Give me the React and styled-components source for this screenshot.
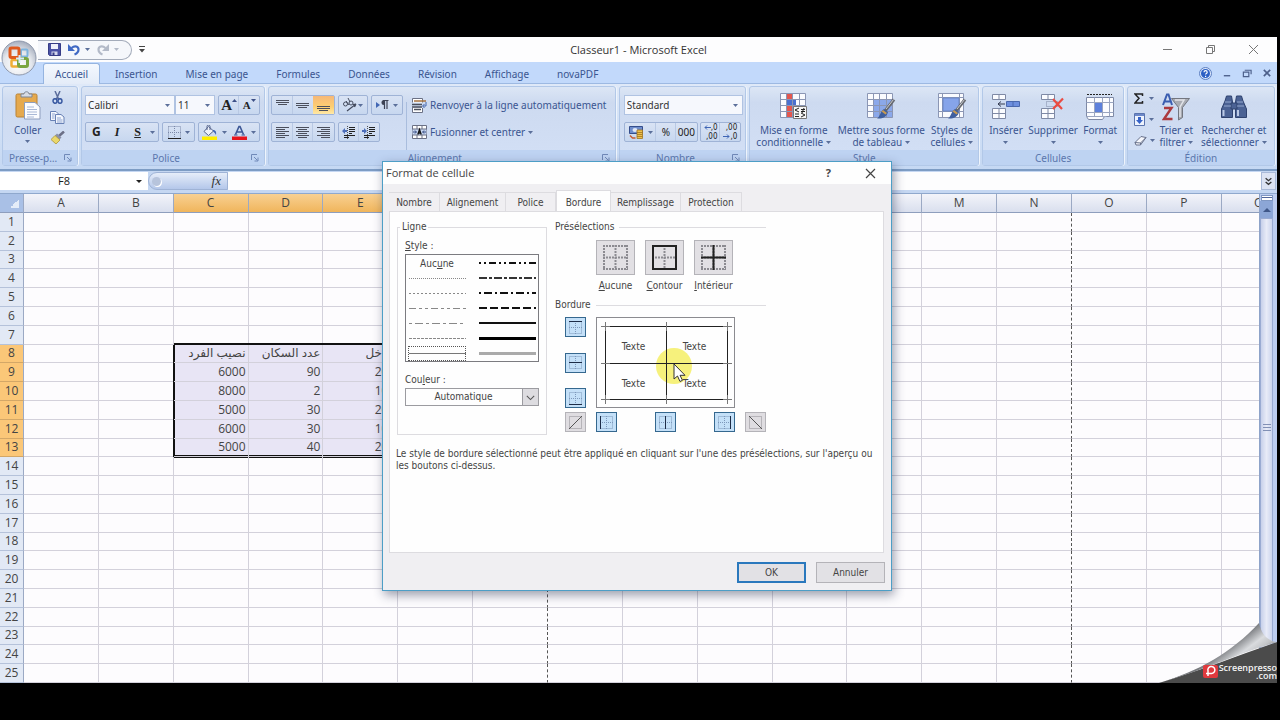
import React, { useState } from "react";
import styled, { createGlobalStyle } from "styled-components";

const RIBBON_FONT = `"Noto Sans", "Open Sans", sans-serif`;
const TITLE_FONT = `"Open Sans", "Noto Sans", sans-serif`;
const DIALOG_FONT = `"DejaVu Sans Condensed", "DejaVu Sans", sans-serif`;
const CELL_FONT = `"Open Sans", "DejaVu Sans", sans-serif`;

const GlobalStyle = createGlobalStyle`
  * { box-sizing: border-box; }
  body { margin: 0; background: #000; }
  button, select, input { font: inherit; color: inherit; margin: 0; padding: 0; }
  svg { display: block; flex: none; }
`;

// ---------------------------------------------------------------------------
// Window
// ---------------------------------------------------------------------------
const Desktop = styled.div`
  height: 100vh;
  padding: 37px 3px 37px 0;
  background: #000;
`;

const Window = styled.div`
  position: relative;
  display: flex;
  flex-direction: column;
  height: 100%;
  overflow: hidden;
  background: #bfd6f7;
  font: 10px/12px ${RIBBON_FONT};
  color: #3a5590;
`;

const TitleBar = styled.header`
  display: grid;
  grid-template-columns: 1fr auto 1fr;
  align-items: center;
  height: 25px;
  background: #fdfdfe;
`;

const Title = styled.h1`
  margin: 0;
  font: 11px/16px ${TITLE_FONT};
  color: #333;
`;

const QuickAccess = styled.div`
  display: flex;
  align-items: center;
  gap: 7px;
  width: 94px;
  height: 20px;
  margin-left: 38px;
  padding-left: 10px;
  border: 1px solid #a3abba;
  border-left: 0;
  border-radius: 0 10px 10px 0;
  background: #f5f7fb;
`;

const QuickWrap = styled.div`
  display: flex;
  align-items: center;
  gap: 7px;
`;

const WindowButtons = styled.div`
  display: flex;
  justify-content: flex-end;
  gap: 32px;
  padding-right: 18px;
`;

const Plain = styled.button`
  display: flex;
  align-items: center;
  justify-content: center;
  gap: ${(p) => p.$gap || 0}px;
  border: 0;
  background: none;
`;

const OfficeButton = styled.button`
  position: absolute;
  left: 1px;
  top: 3px;
  z-index: 2;
  padding: 0;
  border: 0;
  border-radius: 50%;
  background: none;
`;

const TabBar = styled.nav`
  display: flex;
  align-items: flex-end;
  height: 22px;
  padding: 2px 5px 0 43px;
  background: #c2d9fb;
  border-bottom: 1px solid #9db9e2;
`;

const RibbonTab = styled.button`
  height: 20px;
  padding: 0 13px;
  border: 1px solid transparent;
  border-bottom: 0;
  border-radius: 3px 3px 0 0;
  background: none;
  font: 10px/18px ${RIBBON_FONT};
  color: #3a5590;
  white-space: nowrap;

  ${(p) =>
    p.$active &&
    `
    height: 21px;
    margin: 0 1px -1px 0;
    padding: 0 11px;
    border-color: #95b4e0;
    background: linear-gradient(#f4f8fe, #e4ecf8);
  `}
`;

const MdiButtons = styled.div`
  display: flex;
  align-items: center;
  gap: 10px;
  height: 20px;
  margin-left: auto;
`;

// ---------------------------------------------------------------------------
// Ribbon
// ---------------------------------------------------------------------------
const Ribbon = styled.div`
  display: flex;
  gap: 3px;
  height: 87px;
  padding: 2px 2px 3px;
  background: linear-gradient(#dfe9f8, #c5d8f3);
  border-bottom: 2px solid #7d9cc4;
`;

const Group = styled.section`
  display: flex;
  flex-direction: column;
  flex: ${(p) => p.$w} 1 0;
  min-width: 0;
  border: 1px solid #b2c8e8;
  border-radius: 3px;
  background: linear-gradient(#dce6f5 0%, #cddaf0 20%, #d3e0f6 100%);
  box-shadow: 1px 0 0 #eef4fc;
`;

const GroupBody = styled.div`
  display: flex;
  flex: 1;
  min-height: 0;
  gap: ${(p) => p.$gap || 0}px;
  padding: ${(p) => p.$pad || "0 4px"};
`;

const GroupCaption = styled.div`
  display: grid;
  grid-template-columns: ${(p) => (p.$launcher ? "1fr 14px" : "1fr")};
  align-items: center;
  height: 15px;
  padding: 0 2px;
  background: #bed3f2;
  color: #5b77ad;
  text-align: center;
`;

const Stack = styled.div`
  display: flex;
  flex-direction: column;
  gap: ${(p) => p.$gap || 0}px;
  align-items: ${(p) => p.$align || "stretch"};
  min-width: 0;
`;

const Row = styled.div`
  display: flex;
  align-items: center;
  gap: ${(p) => p.$gap || 0}px;
`;

const ButtonBox = styled.div`
  display: flex;
  align-items: center;
  justify-content: space-around;
  width: ${(p) => p.$w}px;
  height: 20px;
  border: 1px solid #9fb3d6;
  border-radius: 2px;
  background: linear-gradient(#d9e3f4, #c7d7ef);
`;

const Tool = styled.button`
  display: flex;
  flex: ${(p) => p.$grow || 2} 1 0;
  align-items: center;
  justify-content: center;
  gap: ${(p) => (p.$tight ? 0 : 4)}px;
  height: 18px;
  border: 0;
  background: ${(p) => (p.$on ? "linear-gradient(#f6b878, #fdcf72 60%, #ffe9a8)" : "none")};
  color: #222;
  box-shadow: ${(p) => (p.$line ? "-1px 0 0 #b9c9e4" : "none")};
`;

const Letter = styled.span`
  font: ${(p) => p.$style || "normal"} bold ${(p) => p.$size || 12}px/14px ${(p) => p.$face || `"Liberation Serif", serif`};
  text-decoration: ${(p) => (p.$under ? "underline" : "none")};
  color: ${(p) => p.$color || "#222"};
`;

const Combo = styled.div`
  display: flex;
  align-items: center;
  width: ${(p) => p.$w}px;
  height: 20px;
  padding: 0 4px 0 2px;
  border: 1px solid #b0c3e2;
  background: #f6f8fd;
  color: #333;
`;

const ComboInput = styled.input`
  flex: 1;
  min-width: 0;
  width: 100%;
  border: 0;
  outline: 0;
  background: none;
`;

const BigTool = styled.button`
  display: flex;
  flex-direction: column;
  align-items: center;
  gap: 4px;
  flex: ${(p) => p.$w || 1} 1 0;
  min-width: 0;
  border: 0;
  background: none;
  line-height: 12px;
  white-space: nowrap;
  text-align: center;
`;

const BigIcon = styled.span`
  display: flex;
  justify-content: center;
  height: 27px;
`;

const Inline = styled.span`
  display: inline-flex;
  align-items: center;
  gap: 3px;
  min-height: 12px;
`;

const TextTool = styled.button`
  display: flex;
  align-items: center;
  gap: 3px;
  height: 20px;
  border: 0;
  background: none;
  white-space: nowrap;
`;

const Separator = styled.span`
  width: 1px;
  height: 50px;
  margin: 7px 5px 0 3px;
  background: #a9bddd;
`;

// ---------------------------------------------------------------------------
// Formula bar
// ---------------------------------------------------------------------------
const FormulaBar = styled.div`
  display: flex;
  height: 23px;
  padding: 1px 1px 3px 0;
  background: #c5d7f2;
  border-bottom: 1px solid #8fa8cd;
`;

const NameBox = styled.div`
  display: flex;
  align-items: center;
  width: 148px;
  padding-right: 6px;
  background: #fff;
  color: #222;
`;

const NameInput = styled.input`
  flex: 1;
  min-width: 0;
  padding-right: 8px;
  border: 0;
  outline: 0;
  background: none;
  text-align: center;
  font-family: ${CELL_FONT};
  font-size: 11px;
`;

const FxArea = styled.div`
  display: flex;
  align-items: center;
  justify-content: space-between;
  width: 80px;
  padding: 0 6px 0 3px;
  border: 1px solid #9fb3d6;
  border-radius: 9px 0 0 9px;
  background: linear-gradient(#e6edf9, #b4c7ea);
`;

const Knob = styled.span`
  width: 9px;
  height: 9px;
  border-radius: 50%;
  background: #b7c4dc;
  box-shadow: 1px 1px 0 #fff;
`;

const FxMark = styled.span`
  font: italic 13px/14px "Liberation Serif", serif;
  color: #333;
`;

const FormulaInput = styled.input`
  flex: 1;
  min-width: 0;
  border: 0;
  outline: 0;
  background: #fdfdfe;
`;

const ExpandButton = styled.button`
  display: flex;
  align-items: center;
  justify-content: center;
  width: 15px;
  border: 1px solid #a9b9d8;
  background: #dce3f3;
`;

// ---------------------------------------------------------------------------
// Sheet
// ---------------------------------------------------------------------------
const Workspace = styled.main`
  display: flex;
  flex: 1;
  min-height: 0;
  overflow: hidden;
`;

const SheetView = styled.div`
  flex: 1;
  min-width: 0;
  overflow: hidden;
  background: #fdfcfe;
`;

const Sheet = styled.table`
  width: 103%;
  height: 100%;
  table-layout: fixed;
  border-collapse: separate;
  border-spacing: 0;
  font: 12px/14px ${CELL_FONT};
  color: #444;
`;

const ColHead = styled.th`
  width: ${(p) => (p.$corner ? "24px" : "auto")};
  height: 19px;
  padding: 0;
  border-right: 1px solid #9ba9c4;
  border-bottom: 1px solid #8e9ebd;
  background: ${(p) =>
    p.$corner ? "#a9c0e6" : p.$on ? "linear-gradient(#f8d092, #f0b55c)" : "linear-gradient(#f3f4fa, #d9dfee)"};
  font-weight: 400;
`;

const CornerMark = styled.div`
  width: 9px;
  height: 9px;
  margin-left: 10px;
  background: linear-gradient(135deg, transparent 50%, #e4ecf8 50%);
`;

const RowHead = styled.th`
  padding: 0;
  border-right: 1px solid #9ba9c4;
  border-bottom: 1px solid ${(p) => (p.$on ? "#d3a767" : "#b5c2da")};
  background: ${(p) => (p.$on ? "#fbc778" : "#e2e9f5")};
  font-weight: 400;
`;

const Cell = styled.td`
  padding: 0 2px 0 0;
  border-right: 1px ${(p) => (p.$page ? "dashed #555" : "solid #d3d1db")};
  border-bottom: 1px solid #d3d1db;
  background: ${(p) => (p.$on ? "#e8e5f5" : "transparent")};
  box-shadow: ${(p) => (p.$edges ? p.$edges : "none")};
  text-align: right;
  white-space: nowrap;
  overflow: hidden;
`;

const Scroller = styled.div`
  display: flex;
  flex-direction: column;
  align-items: center;
  width: 18px;
  padding: 1px 4px 13px 0;
  border-left: 1px solid #8ea3c9;
  background: #bccdf0;
`;

const SplitGrip = styled.span`
  width: 12px;
  height: 6px;
  border: 1px solid #7f97c2;
  background: linear-gradient(#fff 1px, #51669a 1px, #51669a 2px, #fff 2px);
`;

const ScrollArrow = styled.button`
  display: flex;
  align-items: center;
  justify-content: center;
  width: 13px;
  height: 17px;
  border: 0;
  background: #8ca6d6;
`;

const Thumb = styled.div`
  display: flex;
  align-items: center;
  justify-content: center;
  flex: 1;
  width: 13px;
  padding-bottom: 32px;
  border: 1px solid #9aabd2;
  background: linear-gradient(90deg, #c7d0ea, #e8ebf7 50%, #ccd5ee);
`;

// ---------------------------------------------------------------------------
// Dialog
// ---------------------------------------------------------------------------
const Dialog = styled.div`
  position: absolute;
  left: 382px;
  top: 124px;
  z-index: 5;
  display: flex;
  flex-direction: column;
  width: 510px;
  height: 430px;
  border: 1px solid #4d9ec6;
  background: #f0eff2;
  box-shadow: 2px 4px 10px rgba(30, 40, 70, 0.45);
  font: 10px/12px ${DIALOG_FONT};
  color: #444;
`;

const DialogTitle = styled.div`
  display: flex;
  align-items: center;
  height: 22px;
  padding: 0 15px 0 3px;
  background: #fefefe;
  font: 11px/16px ${TITLE_FONT};
`;

const DialogTitleText = styled.h2`
  flex: 1;
  margin: 0;
  font: inherit;
`;

const DialogTabs = styled.div`
  display: flex;
  align-items: flex-end;
  padding: 6px 6px 0;
`;

const DialogTab = styled.button`
  width: ${(p) => p.$w}px;
  height: ${(p) => (p.$active ? 22 : 19)}px;
  margin-bottom: ${(p) => (p.$active ? -1 : 0)}px;
  padding-top: 2px;
  border: 1px solid #dddce0;
  border-left-width: ${(p) => (p.$active ? 1 : 0)}px;
  border-bottom: 0;
  background: ${(p) => (p.$active ? "#fefefe" : "#f0eff2")};
`;

const TabPanel = styled.div`
  display: flex;
  flex-direction: column;
  flex: 1;
  gap: 13px;
  margin: 0 7px 0 6px;
  padding: 9px 8px 9px 7px;
  border: 1px solid #dddce0;
  background: #fefefe;
`;

const PanelColumns = styled.div`
  display: flex;
  gap: 8px;
`;

const LineGroup = styled.fieldset`
  display: flex;
  flex-direction: column;
  width: 150px;
  height: 214px;
  margin: 0;
  padding: 7px 7px 0;
  border: 1px solid #dddce0;
`;

const Legend = styled.legend`
  margin-left: -5px;
  padding: 0 2px;
`;

const FieldLabel = styled.label`
  margin-bottom: 2px;
`;

const StyleList = styled.div`
  display: grid;
  grid-template-columns: 1fr 1fr;
  gap: 0 12px;
  height: 108px;
  margin-bottom: 12px;
  padding: 1px 2px;
  border: 1px solid #7b7b80;
`;

const StyleOption = styled.button`
  display: flex;
  align-items: center;
  justify-content: center;
  min-width: 0;
  height: 15px;
  border: 1px ${(p) => (p.$on ? "dotted #555" : "solid transparent")};
  background: none;
`;

const SelectShell = styled.div`
  position: relative;
  display: flex;
`;

const ColorSelect = styled.select`
  width: 100%;
  height: 18px;
  appearance: none;
  border: 1px solid #9b9ba0;
  border-radius: 0;
  background: #fefefe;
  padding-right: 17px;
  text-align: center;
  text-align-last: center;
`;

const SelectArrow = styled.span`
  position: absolute;
  right: 0;
  top: 0;
  bottom: 0;
  display: flex;
  align-items: center;
  justify-content: center;
  width: 17px;
  border: 1px solid #9b9ba0;
  background: #dddce0;
  pointer-events: none;
`;

const BorderColumn = styled.div`
  display: flex;
  flex-direction: column;
  width: 211px;
`;

const Heading = styled.h3`
  display: flex;
  align-items: center;
  gap: 5px;
  margin: 0;
  font: inherit;

  &::after {
    content: "";
    flex: 1;
    height: 1px;
    background: #dddce0;
  }
`;

const Presets = styled.div`
  display: flex;
  gap: 10px;
  padding: 7px 0 7px 41px;
`;

const Preset = styled.button`
  display: flex;
  flex-direction: column;
  align-items: center;
  gap: 5px;
  width: 39px;
  border: 0;
  background: none;
  white-space: nowrap;
`;

const PresetIcon = styled.span`
  display: flex;
  align-items: center;
  justify-content: center;
  width: 39px;
  height: 35px;
  border: 1px solid #b4b3b8;
  background: #e2e0e4;
`;

const BorderGrid = styled.div`
  display: grid;
  grid-template-columns: 21px 139px 21px;
  gap: 4px 10px;
  padding: 6px 0 0 10px;
`;

const BorderSide = styled.div`
  display: flex;
  flex-direction: column;
  justify-content: space-between;
`;

const BorderBottom = styled.div`
  display: flex;
  justify-content: space-between;
`;

const BorderToggle = styled.button`
  display: flex;
  align-items: center;
  justify-content: center;
  width: 21px;
  height: 20px;
  border: 1px solid ${(p) => (p.$on ? "#35688f" : "#b4b3b8")};
  background: ${(p) => (p.$on ? "#c4e0f8" : "#dfdde1")};
`;

const Preview = styled.div`
  position: relative;
  height: 91px;
  padding: 11px 9px 5px 6px;
  border: 1px solid #8b8b90;
  background: #fefefe;
`;

const PreviewCells = styled.div`
  position: relative;
  display: grid;
  grid-template-columns: 1fr 1fr;
  grid-template-rows: 1fr 1fr;
  height: 100%;
  place-items: center;
`;

const PreviewLines = styled.svg`
  position: absolute;
  left: 0;
  top: 0;
`;

const Pointer = styled.svg`
  position: absolute;
  left: 58px;
  top: 28px;
`;

const HelpText = styled.p`
  margin: 0 -4px 0 -1px;
`;

const DialogFooter = styled.div`
  display: flex;
  justify-content: flex-end;
  gap: 10px;
  padding: 9px 6px 7px;
`;

const PushButton = styled.button`
  width: 69px;
  height: 21px;
  border: ${(p) => (p.$primary ? "2px solid #2a78bd" : "1px solid #b4b3b8")};
  background: #e2e1e5;
`;

// ---------------------------------------------------------------------------
// Page curl
// ---------------------------------------------------------------------------
const Badge = styled.div`
  position: absolute;
  right: 0;
  bottom: 0;
  z-index: 3;
  width: 120px;
  height: 62px;
`;

const BadgeText = styled.div`
  position: absolute;
  right: 0;
  bottom: 3px;
  text-align: right;
  font: 600 9px/8px ${TITLE_FONT};
  color: #f4f4f4;
`;

// ---------------------------------------------------------------------------
// Drawings
// ---------------------------------------------------------------------------
const Caret = ({ color = "#5b6f9a", size = 5 }) => (
  <svg width={size} height="3" viewBox="0 0 5 3" preserveAspectRatio="none">
    <path d="M0 0h5L2.5 3z" fill={color} />
  </svg>
);

const SizeMark = ({ up }) => (
  <svg width="5" height="14" viewBox="0 0 5 14">
    <path d={up ? "M0 4l2.5-3L5 4z" : "M0 1h5L2.5 4z"} fill="#3c4f86" />
  </svg>
);

const Launcher = () => (
  <svg width="8" height="8" viewBox="0 0 8 8" fill="none" stroke="#7089b8">
    <path d="M.5 6V.5H6M3 3l3.5 3.5M7 3.5V7H3.5" />
  </svg>
);

const OfficeLogo = () => (
  <svg width="36" height="36" viewBox="0 0 36 36">
    <defs>
      <radialGradient id="orb" cx=".45" cy=".7" r=".7">
        <stop offset="0" stopColor="#fff" />
        <stop offset=".6" stopColor="#e3e6ec" />
        <stop offset="1" stopColor="#a5adbd" />
      </radialGradient>
    </defs>
    <circle cx="18" cy="18" r="17" fill="url(#orb)" stroke="#8f99ad" />
    <g fill="none">
      <rect x="20" y="9.5" width="6.5" height="7" rx="1" stroke="#7db3dd" strokeWidth="2" />
      <rect x="10.5" y="20" width="7" height="6.5" rx="1" stroke="#f0ae35" strokeWidth="2.5" />
      <rect x="17.5" y="18.5" width="9" height="8" rx="1.5" stroke="#7aa641" strokeWidth="3" />
      <rect x="9" y="8" width="9" height="9.5" rx="1.5" stroke="#df5a1e" strokeWidth="3" />
    </g>
    <path d="M18.5 15v8M15 18.5h8" stroke="#d8ecf8" strokeWidth="2" />
  </svg>
);

const SaveIcon = () => (
  <svg width="13" height="13" viewBox="0 0 13 13">
    <path d="M.5.5h12v12h-11l-1-1z" fill="#4a51a5" stroke="#363c86" />
    <path d="M3 1h7v5H3z" fill="#eef0fa" />
    <path d="M3.5 8.5h6V12h-6z" fill="#d5d8ec" />
    <path d="M4.5 9.5h2V12h-2z" fill="#363c86" />
  </svg>
);

const UndoIcon = ({ color, flip }) => (
  <svg width="12" height="12" viewBox="0 0 12 12">
    <g transform={flip ? "translate(12 0) scale(-1 1)" : undefined}>
      <path d="M3.5 4C7 1 10.5 2.5 10.5 5.5 10.5 8 9 9.5 6.5 10.5" fill="none" stroke={color} strokeWidth="2.2" />
      <path d="M0 0v7h7z" fill={color} />
    </g>
  </svg>
);

const PasteIcon = () => (
  <svg width="26" height="29" viewBox="0 0 26 29">
    <rect x="1" y="3" width="21" height="23" rx="1.5" fill="#e5a94e" stroke="#b98235" />
    <path d="M6 6V3h3c0-3 5-3 5 0h3v3z" fill="#d7dbe4" stroke="#7d8595" />
    <path d="M9.5 11.5H20l5 4.5v12H9.5z" fill="#fbfcff" stroke="#8d9dbd" />
    <path d="M12 16h7M12 18.5h10M12 21h10M12 23.5h10M12 26h7" stroke="#a9b8d6" />
  </svg>
);

const CutIcon = () => (
  <svg width="11" height="13" viewBox="0 0 11 13" fill="none">
    <path d="M3 0l3.5 8M8 0L4.5 8" stroke="#5a6c9b" strokeWidth="1.5" />
    <ellipse cx="3" cy="10" rx="2" ry="2.2" stroke="#33549e" strokeWidth="1.4" />
    <ellipse cx="8" cy="10" rx="2" ry="2.2" stroke="#33549e" strokeWidth="1.4" />
  </svg>
);

const CopyIcon = () => (
  <svg width="15" height="13" viewBox="0 0 15 13" fill="#f4f7fd" stroke="#6881b5">
    <path d="M.5.5H6l2 2v7H.5z" />
    <path d="M5.5 3.5H11l3 2.5v6.5H5.5z" />
    <path d="M7 7h4M7 9h5.5M7 11h5.5M2 3h3M2 5h2.5M2 7h2.5" stroke="#8fa5d2" />
  </svg>
);

const BrushIcon = () => (
  <svg width="14" height="13" viewBox="0 0 14 13">
    <path d="M13 .5L8 5" stroke="#6b6f86" strokeWidth="2.5" />
    <path d="M6 2.5l4.5 4-2 2L4 4.5z" fill="#8a90a8" />
    <path d="M4 4.5l5 4.5-4 4-5-4.5z" fill="#ead76b" stroke="#a58d2c" strokeWidth=".7" />
  </svg>
);

// each line: start, end, y
const lineSets = {
  top: [[0, 13, 1], [0, 13, 3], [2, 11, 5]],
  middle: [[0, 13, 4], [0, 13, 6], [2, 11, 8]],
  bottom: [[0, 13, 7], [0, 13, 9], [2, 11, 11]],
  left: [[0, 13, 1], [0, 9, 3], [0, 13, 5], [0, 9, 7], [0, 13, 9], [0, 9, 11]],
  center: [[0, 13, 1], [2, 11, 3], [0, 13, 5], [2, 11, 7], [0, 13, 9], [2, 11, 11]],
  right: [[0, 13, 1], [4, 13, 3], [0, 13, 5], [4, 13, 7], [0, 13, 9], [4, 13, 11]],
};

const AlignIcon = ({ kind }) => (
  <svg width="13" height="13" viewBox="0 0 13 13">
    {lineSets[kind].map(([a, b, y]) => (
      <path key={y} d={`M${a} ${y}.5H${b}`} stroke="#4b4f5c" />
    ))}
  </svg>
);

const IndentIcon = ({ flip }) => (
  <svg width="14" height="13" viewBox="0 0 14 13">
    <path d="M7 1.5h6M7 3.5h6M7 5.5h6M7 7.5h3M2 9.5h11M2 11.5h5" stroke="#222" />
    <path d="M5.5 0v13" stroke="#555" strokeDasharray="1 1" />
    <path d={flip ? "M0 4h2V2l3 3-3 3V6H0z" : "M5 4H3V2L0 5l3 3V6h2z"} fill="#4b6cb8" />
  </svg>
);

const OrientationIcon = () => (
  <svg width="16" height="14" viewBox="0 0 16 14" fill="none" stroke="#444b5e">
    <path d="M5 13l9-7M14 6l-3 .5M14 6l-1.5 3" strokeWidth="1.2" />
    <circle cx="3.5" cy="6" r="2" />
    <path d="M4 3l3 4" />
    <circle cx="9" cy="5" r="2" />
    <path d="M6 0l2 4" />
  </svg>
);

const ParaIcon = () => (
  <svg width="13" height="12" viewBox="0 0 13 12">
    <path d="M0 3l4 3-4 3z" fill="#4267b4" />
    <path d="M8 6a2.5 2.5 0 0 1 0-5z" fill="#3c4254" />
    <path d="M8.5 1v9M11 1v9M7 1.5h5.5" stroke="#3c4254" strokeWidth="1.2" />
  </svg>
);

const WrapIcon = () => (
  <svg width="15" height="15" viewBox="0 0 15 15" fill="none">
    <path d="M.5 4.5v-4h10v4M.5 10v4.5h10V10" fill="#fff" stroke="#6b7185" />
    <path d="M0 6.5h10M0 9h10M2 11.5h7" stroke="#4b4f5c" strokeWidth="1.3" />
    <path d="M2 3h12" stroke="#a6713c" strokeWidth="1.5" />
    <path d="M14 4v4h-3M12.5 6l-2 2 2 2" stroke="#4566ad" />
  </svg>
);

const MergeIcon = () => (
  <svg width="15" height="14" viewBox="0 0 15 14">
    <path d="M.5.5h14v13H.5z" fill="#fff" stroke="#6b7185" />
    <path d="M5 0v4M10 0v4M5 10v4M10 10v4" stroke="#6b7185" />
    <path d="M0 4h15v6H0z" fill="#c9d8f2" stroke="#6b7185" />
    <path d="M1 7h3M14 7h-3M3 5.5L4.5 7 3 8.5M12 5.5L10.5 7 12 8.5" stroke="#30467e" fill="none" />
    <path d="M5.8 9.5l1.7-5 1.7 5M6.4 8h2.2" stroke="#111" fill="none" strokeWidth="1.3" />
  </svg>
);

const BordersIcon = () => (
  <svg width="13" height="13" viewBox="0 0 13 13" fill="none">
    <path d="M.5.5h12v12M.5.5v12M6.5 0v12M0 6.5h13" stroke="#7a88a8" strokeDasharray="1 1" />
    <path d="M0 12.5h13" stroke="#222" />
  </svg>
);

const FillIcon = () => (
  <svg width="16" height="15" viewBox="0 0 16 15">
    <path d="M6.5 1.5l5 4.5-5 4.5L2 6.5z" fill="#eef2fb" stroke="#56658c" />
    <path d="M5 5V1.5a1.5 1.5 0 0 1 3 0V5" fill="none" stroke="#56658c" />
    <path d="M11 5c3 0 3.5 2.5 3 5-1-2-2-2.5-3-4z" fill="#3f65b5" />
    <path d="M0 11.5h15V15H0z" fill="#ffee00" />
  </svg>
);

const FontColorIcon = () => (
  <svg width="15" height="15" viewBox="0 0 15 15">
    <path d="M3.5 9.5L7 1.5h1l3.5 8M5 7h5.5" stroke="#3d5796" strokeWidth="1.6" fill="none" />
    <path d="M2 10h3.5M9.5 10H13" stroke="#3d5796" />
    <path d="M0 11.5h15V15H0z" fill="#e8141c" />
  </svg>
);

const CurrencyIcon = () => (
  <svg width="16" height="15" viewBox="0 0 16 15">
    <path d="M1.5 1.5h13v7h-13z" fill="#6e8dcc" stroke="#344d8c" />
    <ellipse cx="7" cy="5" rx="2.5" ry="2" fill="#dfe7f7" />
    <path d="M9 5h5.5v8.5H9z" fill="#edc04c" stroke="#a1751f" strokeWidth=".8" />
    <path d="M9 7.5h5.5M9 9.5h5.5M9 11.5h5.5" stroke="#a1751f" strokeWidth=".8" />
    <path d="M2 10.5L4.5 13h3" stroke="#c65b32" fill="none" strokeWidth="1.4" />
  </svg>
);

const Decimal = styled.span`
  display: grid;
  justify-items: end;
  font: 8px/9px ${DIALOG_FONT};
  color: #222;
`;

const DecimalRow = styled.span`
  display: flex;
  align-items: center;
`;

const SmallArrow = ({ right }) => (
  <svg width="7" height="5" viewBox="0 0 7 5" fill="none" stroke="#3f65b5">
    <path d={right ? "M0 2.5h6M4 .5l2 2-2 2" : "M7 2.5H1M3 .5l-2 2 2 2"} />
  </svg>
);

const ConditionalIcon = () => (
  <svg width="29" height="27" viewBox="0 0 29 27">
    <path d="M1.5.5h25v24h-25z" fill="#fafbfe" />
    <path d="M7 1h6v23H7z" fill="#e4574f" />
    <path d="M7 6.5h10v6H7z" fill="#4a70cf" />
    <path d="M13 12.5h7v6h-7z" fill="#e4574f" />
    <path d="M1.5.5h25v24h-25zM1.5 6.5h25M1.5 12.5h25M1.5 18.5h25M7.5.5v24M13.5.5v24M20.5.5v24" fill="none" stroke="#8b96b4" />
    <path d="M14.5 13.5h13v12h-13z" fill="#f7f7f7" stroke="#777" />
    <path d="M20 15l-4 2 4 2M16 21h4M22 16.5h4M22 18.5h4M25 15l-2 5M22 20l4 2-4 2M16 23.5h4" stroke="#222" fill="none" />
  </svg>
);

const BigBrush = () => (
  <g>
    <path d="M28 6.5L19 18" stroke="#65686f" strokeWidth="3" />
    <path d="M27.5 6.5L20 16" stroke="#c9ccd2" strokeWidth="1" />
    <path d="M18 16l4 3c-1 5-6 7-11 6.5 3-1.5 3-7 7-9.5z" fill="#3f5f9f" />
    <path d="M17 17l4 3-1.5 1.5-4-3z" fill="#c79a52" />
  </g>
);

const TableIcon = () => (
  <svg width="30" height="27" viewBox="0 0 30 27">
    <path d="M1.5.5h25v24h-25z" fill="#fafbfe" />
    <path d="M8 6.5h19v18H8z" fill="#8ba8ea" />
    <path d="M1.5.5h25v24h-25zM1.5 6.5h25M1.5 12.5h25M1.5 18.5h25M7.5.5v24M13.5.5v24M20.5.5v24" fill="none" stroke="#8b96b4" />
    <BigBrush />
  </svg>
);

const CellStyleIcon = () => (
  <svg width="30" height="27" viewBox="0 0 30 27">
    <path d="M1.5.5h25v24h-25z" fill="#fafbfe" stroke="#8b96b4" />
    <path d="M1.5 4.5h25M1.5 18.5h25M5.5.5v24M22.5.5v24" stroke="#8b96b4" />
    <path d="M6 5h16v13H6z" fill="#86a4ea" stroke="#6b86c4" />
    <BigBrush />
  </svg>
);

const InsertIcon = () => (
  <svg width="29" height="27" viewBox="0 0 29 27">
    <path d="M1.5 1.5h13v5h-13zM1.5 15.5h13v10h-13zM8 1.5v5M8 15.5v10M1.5 20.5h13" fill="#fbfcff" stroke="#7e89a5" />
    <path d="M15.5 8.5h13v5h-13z" fill="#6d8fdf" stroke="#4a68ae" />
    <path d="M22 8.5v5" stroke="#4a68ae" />
    <path d="M7 11h7M10 8.5L7 11l3 2.5" stroke="#333a50" fill="none" />
  </svg>
);

const DeleteIcon = () => (
  <svg width="26" height="27" viewBox="0 0 26 27">
    <path d="M1.5 1.5h13v5h-13zM1.5 15.5h13v10h-13zM8 1.5v5M8 15.5v10M1.5 20.5h13" fill="#fbfcff" stroke="#7e89a5" />
    <path d="M6.5 8.5h11v5h-11z" fill="none" stroke="#7e89a5" strokeDasharray="1 1" />
    <path d="M13 6l9 10M23 5.5L13 16" stroke="#ea4b42" strokeWidth="2.2" />
  </svg>
);

const FormatIcon = () => (
  <svg width="30" height="28" viewBox="0 0 30 28">
    <path d="M2 1.5h25" stroke="#222" strokeDasharray="2 1" />
    <path d="M1.5 4.5h27v19h-9l-2 3h-14l-2-3z" fill="#fbfcff" stroke="#7e89a5" />
    <path d="M1.5 9.5h27M1.5 19.5h27M9.5 4.5v19M17.5 4.5v19M24.5 4.5v19M1.5 23.5h20" stroke="#9aa5c0" fill="none" />
    <path d="M10 10h7v9h-7z" fill="#5c80dc" />
  </svg>
);

const SortIcon = () => (
  <svg width="28" height="28" viewBox="0 0 28 28" fill="none">
    <path d="M1 12L5 1.5h1.5L10 12M3 8.5h5.5" stroke="#3a5db0" strokeWidth="2" />
    <path d="M2 15h7.5L2 26h8.5" stroke="#ab3a3f" strokeWidth="2.4" />
    <path d="M9.5 5.5h18l-7 9v10l-4 2.5V14.5z" fill="#a8abb3" stroke="#73767f" />
    <path d="M13 7h9l-4 7v10" stroke="#e2e4e9" strokeWidth="1.5" />
  </svg>
);

const FindIcon = () => (
  <svg width="28" height="27" viewBox="0 -1 28 27">
    <g fill="#4b6294" stroke="#2f426f">
      <path d="M6.5 2h5l1 6v15.5h-11V15L5 7z" />
      <path d="M16.5 2h5L23 7l3.5 8v8.5h-11V8z" />
      <path d="M11 9h6v6h-6z" />
    </g>
    <path d="M5 8h6M4 12h7M17 8h6M17 12h7" stroke="#96a9cf" />
    <path d="M3.5 16v6M18 16v6" stroke="#bccae6" strokeWidth="2" />
  </svg>
);

const SigmaIcon = () => (
  <svg width="10" height="11" viewBox="0 0 10 11" fill="none" stroke="#222" strokeWidth="1.5">
    <path d="M8.5 3V1H1l4 4.3L1 10h7.5V8" />
  </svg>
);

const FillDownIcon = () => (
  <svg width="11" height="13" viewBox="0 0 11 13">
    <path d="M.5.5h10v12H.5z" fill="#eef3fd" stroke="#5a74ae" />
    <path d="M1 1h9v2H1z" fill="#6d88c8" />
    <path d="M4 4h3v3h2l-3.5 4L2 7h2z" fill="#3562c8" />
  </svg>
);

const EraserIcon = () => (
  <svg width="13" height="11" viewBox="0 0 13 11">
    <path d="M1 7.5l6-6 5 1L6.500 10H2z" fill="#f5f6fb" stroke="#68718b" />
    <path d="M1 7.5l5.5.5L12 2.5M6.5 8v2" fill="none" stroke="#68718b" />
  </svg>
);

const HelpIcon = () => (
  <svg width="13" height="13" viewBox="0 0 13 13">
    <circle cx="6.5" cy="6.5" r="6" fill="#dbe7fb" stroke="#5d7fc0" />
    <circle cx="6.5" cy="6.5" r="4.5" fill="#2c5fc4" />
    <path d="M5 5.2c0-2 3.2-2 3.2 0 0 1.2-1.6 1.2-1.6 2.3M6.6 8.8V10" stroke="#fff" fill="none" strokeWidth="1.2" />
  </svg>
);

const WinIcon = ({ d, size = 11, color = "#777", w = 1 }) => (
  <svg width={size} height={size} viewBox="0 0 11 11">
    <path d={d} fill="none" stroke={color} strokeWidth={w} />
  </svg>
);

const presetBox = "M2 2h23v23H2z";
const PresetDrawing = ({ kind }) => (
  <svg width="27" height="27" viewBox="0 0 27 27" fill="none">
    <path d="M1 2h25M1 13.5h25M1 25h25M2 1v25M13.5 1v25M25 1v25" stroke="#8c8b91" strokeWidth="2" strokeDasharray="2 1" />
    {kind === "outline" && <path d={presetBox} stroke="#222" strokeWidth="2" />}
    {kind === "inside" && <path d="M13.5 1v25M1 13.5h25" stroke="#222" strokeWidth="2" />}
  </svg>
);

const sidePaths = {
  top: "M0 .5h13",
  middle: "M0 6.5h13",
  bottom: "M0 12.5h13",
  left: "M.5 0v13",
  center: "M6.5 0v13",
  right: "M12.5 0v13",
  up: "M0 13L13 0",
  down: "M0 0l13 13",
};

const SideDrawing = ({ kind }) => {
  const diagonal = kind === "up" || kind === "down";
  return (
    <svg width="13" height="13" viewBox="0 0 13 13" fill="none">
      <path
        d={diagonal ? "M.5.5h12v12H.5z" : "M.5.5h12v12H.5zM6.5 0v13M0 6.5h13"}
        stroke={diagonal ? "#8c8b91" : "#7d98bb"}
        strokeDasharray="1 1"
      />
      <path d={sidePaths[kind]} stroke={diagonal ? "#555" : "#1d2c47"} />
    </svg>
  );
};

const LineSample = ({ w, dash, color }) => (
  <svg width="57" height="7" viewBox="0 0 57 7" fill="none">
    <path d={w === 2 ? "M0 3h57" : "M0 3.5h57"} stroke={color} strokeWidth={w} strokeDasharray={dash} />
  </svg>
);

// ---------------------------------------------------------------------------
// Data
// ---------------------------------------------------------------------------
const ribbonTabs = ["Accueil", "Insertion", "Mise en page", "Formules", "Données", "Révision", "Affichage", "novaPDF"];

const columns = "ABCDEFGHIJKLMNOPQ".split("");
const rows = Array.from({ length: 25 }, (_, i) => i + 1);
const selectedColumns = ["C", "D", "E"];

const cells = {
  8: { C: "نصيب الفرد", D: "عدد السكان", E: "الدخل" },
  9: { C: "6000", D: "90", E: "200" },
  10: { C: "8000", D: "2", E: "100" },
  11: { C: "5000", D: "30", E: "200" },
  12: { C: "6000", D: "30", E: "100" },
  13: { C: "5000", D: "40", E: "200" },
};

const dialogTabs = [
  ["Nombre", 51],
  ["Alignement", 66],
  ["Police", 50],
  ["Bordure", 55],
  ["Remplissage", 70],
  ["Protection", 61],
];

// two columns, read left to right
const lineStyles = [
  { id: "none" },
  { id: "dash-dot-dot", w: 2, dash: "2 3 2 3 7 3", color: "#111" },
  { id: "dotted", w: 1, dash: "1 1", color: "#888" },
  { id: "slanted", w: 2, dash: "8 2 3 2", color: "#333" },
  { id: "fine-dash", w: 1, dash: "2 2", color: "#888" },
  { id: "thick-dash-dot", w: 2, dash: "2 3 8 3", color: "#111" },
  { id: "thin-dash-dot-dot", w: 1, dash: "7 3 3 3 3 3", color: "#888" },
  { id: "thick-dash", w: 2, dash: "8 3", color: "#111" },
  { id: "thin-dash-dot", w: 1, dash: "3 3 8 3", color: "#888" },
  { id: "medium", w: 2, color: "#111" },
  { id: "thin-dash", w: 1, dash: "3 1", color: "#888" },
  { id: "thick", w: 3, color: "#000" },
  { id: "thin", w: 1, color: "#777" },
  { id: "double", w: 3, color: "#aaa" },
];

// outline of the selected range, as shadows so that the rows keep their height
function selectionEdges(row, col) {
  const edges = [];
  if (row === 8) edges.push("0 -2px 0 #111");
  if (row === 13) edges.push("0 1px 0 #111", "inset 0 -1px 0 #111");
  if (col === "C") edges.push("-1px 0 0 #111", "inset 1px 0 0 #111");
  return edges.join(", ");
}

// ---------------------------------------------------------------------------
// Parts
// ---------------------------------------------------------------------------
function RibbonGroup({ w, name, launcher, gap, pad, children }) {
  return (
    <Group $w={w} aria-label={name}>
      <GroupBody $gap={gap} $pad={pad}>{children}</GroupBody>
      <GroupCaption $launcher={launcher}>
        <span>{name}</span>
        {launcher && (
          <Plain aria-label={`Options ${name}`}>
            <Launcher />
          </Plain>
        )}
      </GroupCaption>
    </Group>
  );
}

function Big({ icon, first, second, w }) {
  return (
    <BigTool $w={w}>
      <BigIcon>{icon}</BigIcon>
      <Stack $align="center">
        <span>{first}</span>
        <Inline>
          {second}
          <Caret />
        </Inline>
      </Stack>
    </BigTool>
  );
}

function HomeRibbon() {
  return (
    <Ribbon>
      <RibbonGroup w={75} name="Presse-p…" launcher pad="4px 8px 0 11px" gap={9}>
        <Stack $gap={4} $align="center">
          <PasteIcon />
          <span>Coller</span>
          <Caret />
        </Stack>
        <Stack $gap={7} $align="center">
          <Plain aria-label="Couper"><CutIcon /></Plain>
          <Plain aria-label="Copier"><CopyIcon /></Plain>
          <Plain aria-label="Reproduire la mise en forme"><BrushIcon /></Plain>
        </Stack>
      </RibbonGroup>

      <RibbonGroup w={184} name="Police" launcher pad="8px 3px 0">
        <Stack $gap={7}>
          <Row $gap={3}>
            <Row>
              <Combo $w={90}>
                <ComboInput aria-label="Police" defaultValue="Calibri" />
                <Caret />
              </Combo>
              <Combo $w={40}>
                <ComboInput aria-label="Taille" defaultValue="11" />
                <Caret />
              </Combo>
            </Row>
            <ButtonBox $w={42}>
              <Tool aria-label="Agrandir" $tight><Letter $size={15}>A</Letter><SizeMark up /></Tool>
              <Tool aria-label="Réduire" $tight $line><Letter $size={11}>A</Letter><SizeMark /></Tool>
            </ButtonBox>
          </Row>
          <Row $gap={3}>
            <ButtonBox $w={74}>
              <Tool aria-label="Gras"><Letter $face={RIBBON_FONT}>G</Letter></Tool>
              <Tool aria-label="Italique"><Letter $style="italic">I</Letter></Tool>
              <Tool aria-label="Souligné"><Letter $under>S</Letter></Tool>
              <Tool aria-label="Options de soulignement" $grow={1}><Caret /></Tool>
            </ButtonBox>
            <ButtonBox $w={33}>
              <Tool aria-label="Bordures"><BordersIcon /><Caret /></Tool>
            </ButtonBox>
            <ButtonBox $w={62}>
              <Tool aria-label="Remplissage"><FillIcon /><Caret /></Tool>
              <Tool aria-label="Couleur de police"><FontColorIcon /><Caret /></Tool>
            </ButtonBox>
          </Row>
        </Stack>
      </RibbonGroup>

      <RibbonGroup w={350} name="Alignement" launcher pad="8px 2px 0">
        <Stack $gap={7}>
          <Row $gap={3}>
            <ButtonBox $w={64}>
              <Tool aria-label="Haut"><AlignIcon kind="top" /></Tool>
              <Tool aria-label="Milieu" $line><AlignIcon kind="middle" /></Tool>
              <Tool aria-label="Bas" $on><AlignIcon kind="bottom" /></Tool>
            </ButtonBox>
            <ButtonBox $w={30}>
              <Tool aria-label="Orientation" $tight><OrientationIcon /><Caret /></Tool>
            </ButtonBox>
            <ButtonBox $w={32}>
              <Tool aria-label="Sens du texte"><ParaIcon /><Caret /></Tool>
            </ButtonBox>
          </Row>
          <Row $gap={3}>
            <ButtonBox $w={64}>
              <Tool aria-label="Gauche"><AlignIcon kind="left" /></Tool>
              <Tool aria-label="Centre" $line><AlignIcon kind="center" /></Tool>
              <Tool aria-label="Droite" $line><AlignIcon kind="right" /></Tool>
            </ButtonBox>
            <ButtonBox $w={42}>
              <Tool aria-label="Diminuer le retrait"><IndentIcon /></Tool>
              <Tool aria-label="Augmenter le retrait" $line><IndentIcon flip /></Tool>
            </ButtonBox>
          </Row>
        </Stack>
        <Separator />
        <Stack $gap={7}>
          <TextTool><WrapIcon />Renvoyer à la ligne automatiquement</TextTool>
          <TextTool><MergeIcon />Fusionner et centrer<Caret /></TextTool>
        </Stack>
      </RibbonGroup>

      <RibbonGroup w={127} name="Nombre" launcher pad="8px 4px 0">
        <Stack $gap={7}>
          <Combo $w={119}>
            <ComboInput aria-label="Format de nombre" defaultValue="Standard" />
            <Caret />
          </Combo>
          <Row $gap={2}>
            <ButtonBox $w={75}>
              <Tool aria-label="Monétaire" $grow={3}><CurrencyIcon /><Caret /></Tool>
              <Tool $line>%</Tool>
              <Tool $line>000</Tool>
            </ButtonBox>
            <ButtonBox $w={42}>
              <Tool aria-label="Ajouter une décimale">
                <Decimal>
                  <DecimalRow><SmallArrow />,0</DecimalRow>
                  <DecimalRow>,00</DecimalRow>
                </Decimal>
              </Tool>
              <Tool aria-label="Réduire les décimales" $line>
                <Decimal>
                  <DecimalRow>,00</DecimalRow>
                  <DecimalRow><SmallArrow right />,0</DecimalRow>
                </Decimal>
              </Tool>
            </ButtonBox>
          </Row>
        </Stack>
      </RibbonGroup>

      <RibbonGroup w={231} name="Style" pad="6px 1px 0">
        <Big w={85} icon={<ConditionalIcon />} first="Mise en forme" second="conditionnelle" />
        <Big w={90} icon={<TableIcon />} first="Mettre sous forme" second="de tableau" />
        <Big w={51} icon={<CellStyleIcon />} first="Styles de" second="cellules" />
      </RibbonGroup>

      <RibbonGroup w={141} name="Cellules" pad="6px 1px 0">
        <Big w={43} icon={<InsertIcon />} first="Insérer" />
        <Big w={51} icon={<DeleteIcon />} first="Supprimer" />
        <Big w={43} icon={<FormatIcon />} first="Format" />
      </RibbonGroup>

      <RibbonGroup w={148} name="Édition" pad="6px 4px 0 6px">
        <Stack $gap={9}>
          <Plain $gap={5} aria-label="Somme"><SigmaIcon /><Caret /></Plain>
          <Plain $gap={4} aria-label="Recopier"><FillDownIcon /><Caret /></Plain>
          <Plain $gap={3} aria-label="Effacer"><EraserIcon /><Caret /></Plain>
        </Stack>
        <Big w={42} icon={<SortIcon />} first="Trier et" second="filtrer" />
        <Big w={70} icon={<FindIcon />} first="Rechercher et" second="sélectionner" />
      </RibbonGroup>
    </Ribbon>
  );
}

function SheetTable() {
  return (
    <Sheet>
      <thead>
        <tr>
          <ColHead $corner aria-label="Tout sélectionner"><CornerMark /></ColHead>
          {columns.map((c) => (
            <ColHead key={c} $on={selectedColumns.includes(c)}>{c}</ColHead>
          ))}
        </tr>
      </thead>
      <tbody>
        {rows.map((r) => (
          <tr key={r}>
            <RowHead $on={r >= 8 && r <= 13}>{r}</RowHead>
            {columns.map((c) => {
              const on = Boolean(cells[r]) && selectedColumns.includes(c);
              return (
                <Cell key={c} $on={on} $edges={on && selectionEdges(r, c)} $page={c === "G" || c === "N"}>
                  {on ? cells[r][c] : null}
                </Cell>
              );
            })}
          </tr>
        ))}
      </tbody>
    </Sheet>
  );
}

function LineSection() {
  const [line, setLine] = useState("thin");
  return (
    <LineGroup>
      <Legend>Ligne</Legend>
      <FieldLabel as="span" id="style-label"><u>S</u>tyle :</FieldLabel>
      <StyleList role="group" aria-labelledby="style-label">
        {lineStyles.map((s) => (
          <StyleOption key={s.id} $on={s.id === line} aria-label={s.id === "none" ? undefined : s.id} onClick={() => setLine(s.id)}>
            {s.id === "none" ? <span>Auc<u>u</u>ne</span> : <LineSample {...s} />}
          </StyleOption>
        ))}
      </StyleList>
      <FieldLabel htmlFor="line-color">Cou<u>l</u>eur :</FieldLabel>
      <SelectShell>
        <ColorSelect id="line-color" defaultValue="auto">
          <option value="auto">Automatique</option>
        </ColorSelect>
        <SelectArrow><WinIcon d="M1 3.5L5.5 8 10 3.5" size={9} color="#555" w={1.3} /></SelectArrow>
      </SelectShell>
    </LineGroup>
  );
}

function BorderSection() {
  return (
    <BorderColumn>
      <Heading>Présélections</Heading>
      <Presets>
        <Preset><PresetIcon><PresetDrawing kind="none" /></PresetIcon><span><u>A</u>ucune</span></Preset>
        <Preset><PresetIcon><PresetDrawing kind="outline" /></PresetIcon><span><u>C</u>ontour</span></Preset>
        <Preset><PresetIcon><PresetDrawing kind="inside" /></PresetIcon><span><u>I</u>ntérieur</span></Preset>
      </Presets>
      <Heading>Bordure</Heading>
      <BorderGrid>
        <BorderSide>
          {["top", "middle", "bottom"].map((k) => (
            <BorderToggle key={k} $on aria-label={k}><SideDrawing kind={k} /></BorderToggle>
          ))}
        </BorderSide>
        <Preview>
          <PreviewLines width="137" height="89" viewBox="0 0 137 89" fill="none">
            <circle cx="77" cy="48" r="18" fill="#f6f17c" />
            <path d="M8.5 8.5h122v73H8.5zM69.5 8v74M8 45.5h123" stroke="#222" />
            <path d="M4 8.5h9M4 45.5h9M4 81.5h9M126 8.5h9M126 45.5h9M126 81.5h9M8.5 4v9M69.5 4v9M130.5 4v9M8.5 77v9M69.5 77v9M130.5 77v9" stroke="#777" />
          </PreviewLines>
          <PreviewCells>
            <span>Texte</span>
            <span>Texte</span>
            <span>Texte</span>
            <span>Texte</span>
          </PreviewCells>
          <Pointer width="32" height="38" viewBox="0 0 32 38">
            <path d="M19 18v15l3.5-3 2.5 5.5 2.5-1.2-2.5-5h5z" fill="#fff" stroke="#333" />
          </Pointer>
        </Preview>
        <span />
        <BorderToggle aria-label="Diagonale montante"><SideDrawing kind="up" /></BorderToggle>
        <BorderBottom>
          {["left", "center", "right"].map((k) => (
            <BorderToggle key={k} $on aria-label={k}><SideDrawing kind={k} /></BorderToggle>
          ))}
        </BorderBottom>
        <BorderToggle aria-label="Diagonale descendante"><SideDrawing kind="down" /></BorderToggle>
      </BorderGrid>
    </BorderColumn>
  );
}

function CellFormatDialog() {
  return (
    <Dialog role="dialog" aria-labelledby="dialog-title">
      <DialogTitle>
        <DialogTitleText id="dialog-title">Format de cellule</DialogTitleText>
        <Row $gap={34}>
          <Plain><b>?</b></Plain>
          <Plain aria-label="Fermer"><WinIcon d="M1 1l9 9M10 1l-9 9" color="#444" w={1.2} /></Plain>
        </Row>
      </DialogTitle>
      <DialogTabs role="tablist">
        {dialogTabs.map(([name, w]) => (
          <DialogTab key={name} role="tab" $w={w} $active={name === "Bordure"} aria-selected={name === "Bordure"}>
            {name}
          </DialogTab>
        ))}
      </DialogTabs>
      <TabPanel role="tabpanel">
        <PanelColumns>
          <LineSection />
          <BorderSection />
        </PanelColumns>
        <HelpText>
          Le style de bordure sélectionné peut être appliqué en cliquant sur l'une des présélections, sur l'aperçu ou les
          boutons ci-dessus.
        </HelpText>
      </TabPanel>
      <DialogFooter>
        <PushButton $primary>OK</PushButton>
        <PushButton>Annuler</PushButton>
      </DialogFooter>
    </Dialog>
  );
}

export default function App() {
  const [tab, setTab] = useState("Accueil");

  return (
    <Desktop>
      <GlobalStyle />
      <Window>
        <TitleBar>
          <QuickWrap>
            <QuickAccess>
              <Plain aria-label="Enregistrer"><SaveIcon /></Plain>
              <Plain aria-label="Annuler" $gap={5}><UndoIcon color="#4069c4" /><Caret /></Plain>
              <Plain aria-label="Rétablir" $gap={5}><UndoIcon color="#b3bac8" flip /><Caret color="#b3bac8" /></Plain>
            </QuickAccess>
            <Plain aria-label="Personnaliser">
              <svg width="6" height="7" viewBox="0 0 6 7"><path d="M0 .5h6" stroke="#444" /><path d="M0 3h6L3 6.5z" fill="#444" /></svg>
            </Plain>
          </QuickWrap>
          <Title>Classeur1 - Microsoft Excel</Title>
          <WindowButtons>
            <Plain aria-label="Réduire"><WinIcon d="M1 5.5h9" /></Plain>
            <Plain aria-label="Restaurer"><WinIcon d="M1.5 3.5h6v6h-6zM3.5 3V1.5h6v6H8" /></Plain>
            <Plain aria-label="Fermer"><WinIcon d="M1 1l9 9M10 1l-9 9" /></Plain>
          </WindowButtons>
        </TitleBar>
        <OfficeButton aria-label="Bouton Office"><OfficeLogo /></OfficeButton>

        <TabBar>
          {ribbonTabs.map((t) => (
            <RibbonTab key={t} $active={t === tab} onClick={() => setTab(t)}>{t}</RibbonTab>
          ))}
          <MdiButtons>
            <Plain aria-label="Aide"><HelpIcon /></Plain>
            <Plain aria-label="Réduire le classeur"><WinIcon d="M2 8.5h7" color="#4c5f8a" w={1.5} size={10} /></Plain>
            <Plain aria-label="Restaurer le classeur"><WinIcon d="M1.5 4.5h6v5h-6zM3 2.5h7V7" color="#4c5f8a" w={1.3} size={10} /></Plain>
            <Plain aria-label="Fermer le classeur"><WinIcon d="M2 2l7 7M9 2L2 9" color="#4c5f8a" w={1.8} size={10} /></Plain>
          </MdiButtons>
        </TabBar>

        <HomeRibbon />

        <FormulaBar>
          <NameBox>
            <NameInput aria-label="Zone Nom" defaultValue="F8" />
            <Caret color="#222" size={6} />
          </NameBox>
          <FxArea>
            <Knob />
            <FxMark>fx</FxMark>
          </FxArea>
          <FormulaInput aria-label="Barre de formule" />
          <ExpandButton aria-label="Développer">
            <WinIcon d="M2 1.5l3.5 3 3.5-3M2 6l3.5 3L9 6" color="#333" w={1.6} size={9} />
          </ExpandButton>
        </FormulaBar>

        <Workspace>
          <SheetView><SheetTable /></SheetView>
          <Scroller>
            <SplitGrip />
            <ScrollArrow aria-label="Défiler vers le haut">
              <svg width="8" height="4" viewBox="0 0 8 4"><path d="M0 4l4-4 4 4z" fill="#3f5788" /></svg>
            </ScrollArrow>
            <Thumb>
              <svg width="8" height="8" viewBox="0 0 8 8"><path d="M0 .5h8M0 3.5h8M0 6.5h8" stroke="#8190b5" /></svg>
            </Thumb>
          </Scroller>
        </Workspace>

        <CellFormatDialog />

        <Badge>
          <svg width="120" height="62" viewBox="0 0 120 62">
            <defs>
              <linearGradient id="curl" gradientUnits="userSpaceOnUse" x1="78" y1="20" x2="96" y2="44">
                <stop offset="0" stopColor="#77797d" />
                <stop offset=".45" stopColor="#d9dbde" />
                <stop offset=".7" stopColor="#c3c5c8" />
                <stop offset="1" stopColor="#85878b" />
              </linearGradient>
            </defs>
            <path d="M2 62C50 47 85 33 120 21v41z" fill="#4b4b4b" />
            <path d="M2 62C42 50 74 32 102 2c2 10 8 18 18 19C85 31 50 48 2 62z" fill="url(#curl)" />
            <rect x="46" y="44" width="15" height="13" rx="2" fill="#e0393e" />
            <path d="M51 55v-5a3.5 3.5 0 1 1 3.5 2.5H49" fill="none" stroke="#fff" strokeWidth="1.5" />
          </svg>
          <BadgeText>Screenpresso<br />.com</BadgeText>
        </Badge>
      </Window>
    </Desktop>
  );
}
